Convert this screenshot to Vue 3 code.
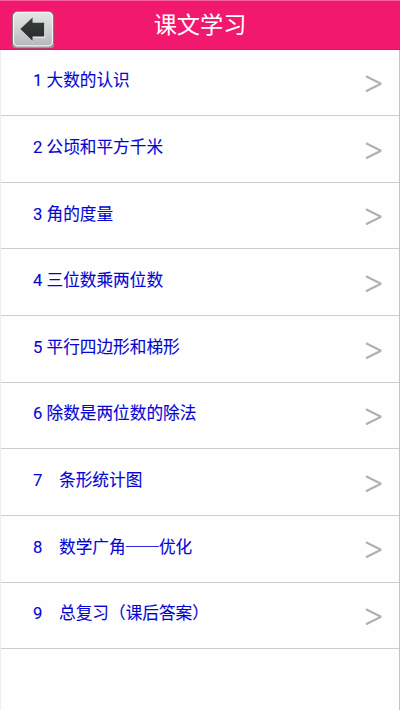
<script setup>
const lessons = [
  { no: '1 ', name: '大数的认识' },
  { no: '2 ', name: '公顷和平方千米' },
  { no: '3 ', name: '角的度量' },
  { no: '4 ', name: '三位数乘两位数' },
  { no: '5 ', name: '平行四边形和梯形' },
  { no: '6 ', name: '除数是两位数的除法' },
  { no: '7\u3000', name: '条形统计图' },
  { no: '8\u3000', name: '数学广角──优化' },
  { no: '9\u3000', name: '总复习（课后答案）' },
]
</script>

<template>
  <div class="screen" lang="zh-CN">
    <header class="bar">
      <button class="back" aria-label="返回">
        <svg width="44" height="40" viewBox="0 0 44 40">
          <defs>
            <linearGradient id="face" x1="0" y1="0" x2="0" y2="1">
              <stop offset="0" stop-color="#e4e6e6" />
              <stop offset="0.5" stop-color="#cfd2d2" />
              <stop offset="1" stop-color="#b4b8b8" />
            </linearGradient>
            <linearGradient id="arrow" x1="0" y1="0" x2="0" y2="1">
              <stop offset="0" stop-color="#394040" />
              <stop offset="1" stop-color="#252b2b" />
            </linearGradient>
          </defs>
          <rect x="1" y="2" width="42.3" height="37.5" rx="5" fill="#7d6970" />
          <rect x="1.5" y="33" width="41.5" height="6" rx="3" fill="#99989a" />
          <rect x="2.5" y="3.4" width="39" height="33.4" rx="4" fill="url(#face)" stroke="#f3f5f5" stroke-width="1.2" />
          <path d="M10 20.7 22 9.5V14.5H34V28.7H22V33Z" fill="#edf0f0" />
          <path d="M9.3 20 21.6 8.5V13.7H33.2V27.5H21.6V32Z" fill="url(#arrow)" />
        </svg>
      </button>
      <h1 class="title">课文学习</h1>
    </header>
    <ul class="list">
      <li v-for="lesson in lessons" :key="lesson.name" class="row">
        <span class="label">{{ lesson.no }}<span class="name">{{ lesson.name }}</span></span>
        <svg class="chevron" width="18" height="18" viewBox="0 0 18 18">
          <path d="M1 1.2 16 8.7 1 16.2" fill="none" stroke="#b0b0b0" stroke-width="2.1" stroke-linejoin="bevel" />
        </svg>
      </li>
    </ul>
  </div>
</template>

<style>
body {
  background: #fff;
}
</style>

<style scoped>
.screen {
  box-sizing: border-box;
  width: 400px;
  height: 710px;
  overflow: hidden;
  background: #fefefe;
  font-family: Roboto, "Noto Sans CJK SC", sans-serif;
}
.bar {
  position: relative;
  box-sizing: border-box;
  height: 49.5px;
  display: flex;
  justify-content: center;
  background: #f1186d;
  border-top: 1px solid #f660a0;
  border-bottom: 1px solid #d51a60;
}
.back {
  position: absolute;
  left: 11px;
  top: 8px;
  padding: 0;
  border: 0;
  background: none;
  line-height: 0;
}
.title {
  margin: 0;
  font-size: 23.2px;
  font-weight: 400;
  line-height: 48px;
  color: #fff;
}
.list {
  box-sizing: border-box;
  height: 660.5px;
  margin: 0;
  padding: 0;
  list-style: none;
  border-left: 1px solid #eee;
  border-right: 1px solid #c4c4c4;
}
.row {
  box-sizing: border-box;
  height: 66.64px;
  display: flex;
  align-items: flex-start;
  justify-content: space-between;
  padding: 0 16px 0 32px;
  border-bottom: 1px solid #cdcdcd;
}
.label {
  padding-top: 17.8px;
  font-size: 16.67px;
  line-height: 24px;
  color: #0505d2;
  -webkit-text-stroke: 0.1px #0505d2;
  white-space: pre;
}
.name {
  font-family: "Noto Sans CJK SC", sans-serif;
}
.chevron {
  margin-top: 25.5px;
}
</style>
